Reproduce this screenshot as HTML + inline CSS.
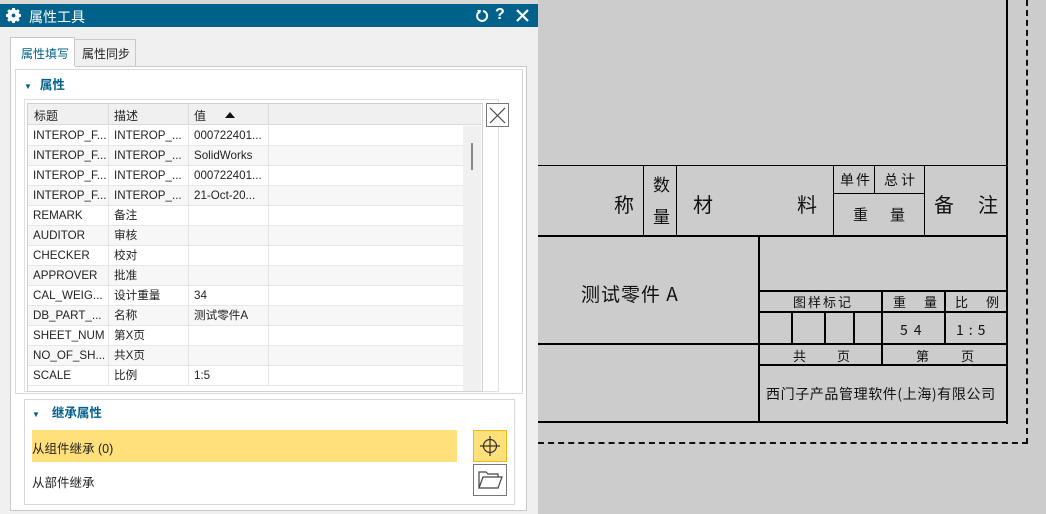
<!DOCTYPE html>
<html><head><meta charset="utf-8"><style>
*{margin:0;padding:0;box-sizing:border-box}
body{width:1046px;height:514px;overflow:hidden;background:#cccccc;position:relative;font-family:"Liberation Sans","Noto Sans CJK SC",sans-serif;font-size:12px;color:#222}
.a{position:absolute}
.hl{position:absolute;background:#000}
.dlg{left:0;top:0;width:538px;height:514px;background:#f0f0f0}
.title{left:0;top:4px;width:538px;height:23px;background:#00618a;color:#fff;font-size:14px}
.row{position:absolute;left:28px;width:435px;height:20px;border-bottom:1px solid #e6e6e6}
.row span{position:absolute;top:0;line-height:20px;height:20px;white-space:nowrap;font-size:11.6px;color:#222}
.cd{position:absolute;top:0;height:20px;width:1px;background:#e3e3e3}
.t{position:absolute;font-family:"WenQuanYi Zen Hei","Noto Sans CJK SC",sans-serif;color:#111;white-space:nowrap}
</style></head><body>
<div class="a dlg"></div>
<div class="a" style="left:0;top:0;width:538px;height:4px;background:#d8d8d8"></div>
<div class="a title">
 <svg class="a" style="left:6px;top:4px" width="15" height="15" viewBox="0 0 16 16"><circle cx="8" cy="8" r="5" fill="none" stroke="#fff" stroke-width="3"/><g stroke="#fff" stroke-width="3"><line x1="8" y1="0" x2="8" y2="16"/><line x1="0" y1="8" x2="16" y2="8"/><line x1="2.3" y1="2.3" x2="13.7" y2="13.7"/><line x1="13.7" y1="2.3" x2="2.3" y2="13.7"/></g><circle cx="8" cy="8" r="2" fill="#00618a"/></svg>
 <span class="a" style="left:29px;top:3px">属性工具</span>
 <svg class="a" style="left:475px;top:5px" width="14" height="14" viewBox="0 0 14 14"><path d="M4 3 A5 5 0 1 0 8 2" fill="none" stroke="#fff" stroke-width="2"/><path d="M2 1 L6 1 L5 5Z" fill="#fff"/></svg>
 <span class="a" style="left:495px;top:2px;font-weight:bold;font-size:16px">?</span>
 <svg class="a" style="left:516px;top:5px" width="13" height="13" viewBox="0 0 13 13"><path d="M1 1L12 12M12 1L1 12" stroke="#fff" stroke-width="2.2"/></svg>
</div>
<div class="a" style="left:10px;top:37px;width:65px;height:31px;background:#fff;border:1px solid #c8c8c8;border-bottom:none;color:#00618a;padding:7px 0 0 10px">属性填写</div>
<div class="a" style="left:75px;top:39px;width:61px;height:27px;background:#f0f0f0;border:1px solid #c8c8c8;border-left:none;border-bottom:none;padding:5px 0 0 7px">属性同步</div>
<div class="a" style="left:10px;top:66px;width:517px;height:445px;border:1px solid #c8c8c8;border-top:none;background:#fff"></div>
<div class="a" style="left:75px;top:66px;width:452px;height:1px;background:#c8c8c8"></div>
<div class="a" style="left:15px;top:69px;width:508px;height:325px;border:1px solid #d8d8d8;background:#fff"></div>
<div class="a" style="left:24px;top:74px;font-weight:bold;color:#00618a;font-size:12.5px"><span style="font-size:8px;margin-right:8px">▼</span>属性</div>
<div class="a" style="left:24px;top:99px;width:475px;height:293px;border:1px solid #e0e0e0"></div>
<div class="a" style="left:27px;top:103px;width:456px;height:289px;border:1px solid #d0d0d0;background:#fff"></div>
<div class="a" style="left:28px;top:104px;width:453px;height:21px;background:#f0f0f0;border-bottom:1px solid #d8d8d8"></div>
<div class="a" style="left:108px;top:104px;width:1px;height:21px;background:#d8d8d8"></div>
<div class="a" style="left:188px;top:104px;width:1px;height:21px;background:#d8d8d8"></div>
<div class="a" style="left:268px;top:104px;width:1px;height:21px;background:#d8d8d8"></div>
<span class="a" style="left:34px;top:107px">标题</span><span class="a" style="left:114px;top:107px">描述</span><span class="a" style="left:194px;top:107px">值</span>
<svg class="a" style="left:225px;top:112px" width="10" height="6"><path d="M0 6L5 0L10 6Z" fill="#111"/></svg>
<div class="a" style="left:463px;top:126px;width:18px;height:265px;background:#f0f0f0"></div>
<div class="a" style="left:471px;top:143px;width:2px;height:27px;background:#888"></div>
<div class="a" style="left:486px;top:103px;width:23px;height:24px;border:1px solid #777;background:#fff"></div>
<svg class="a" style="left:489px;top:107px" width="17" height="17"><path d="M1 1L16 16M16 1L1 16" stroke="#444" stroke-width="1.2"/></svg>
<div class="row" style="top:126px"><i class="cd" style="left:80px"></i><i class="cd" style="left:160px"></i><i class="cd" style="left:240px"></i><span style="left:5px">INTEROP_F...</span><span style="left:86px">INTEROP_...</span><span style="left:166px">000722401...</span></div>
<div class="row" style="top:146px;background:#f7f7f7"><i class="cd" style="left:80px"></i><i class="cd" style="left:160px"></i><i class="cd" style="left:240px"></i><span style="left:5px">INTEROP_F...</span><span style="left:86px">INTEROP_...</span><span style="left:166px">SolidWorks</span></div>
<div class="row" style="top:166px"><i class="cd" style="left:80px"></i><i class="cd" style="left:160px"></i><i class="cd" style="left:240px"></i><span style="left:5px">INTEROP_F...</span><span style="left:86px">INTEROP_...</span><span style="left:166px">000722401...</span></div>
<div class="row" style="top:186px;background:#f7f7f7"><i class="cd" style="left:80px"></i><i class="cd" style="left:160px"></i><i class="cd" style="left:240px"></i><span style="left:5px">INTEROP_F...</span><span style="left:86px">INTEROP_...</span><span style="left:166px">21-Oct-20...</span></div>
<div class="row" style="top:206px"><i class="cd" style="left:80px"></i><i class="cd" style="left:160px"></i><i class="cd" style="left:240px"></i><span style="left:5px">REMARK</span><span style="left:86px">备注</span></div>
<div class="row" style="top:226px;background:#f7f7f7"><i class="cd" style="left:80px"></i><i class="cd" style="left:160px"></i><i class="cd" style="left:240px"></i><span style="left:5px">AUDITOR</span><span style="left:86px">审核</span></div>
<div class="row" style="top:246px"><i class="cd" style="left:80px"></i><i class="cd" style="left:160px"></i><i class="cd" style="left:240px"></i><span style="left:5px">CHECKER</span><span style="left:86px">校对</span></div>
<div class="row" style="top:266px;background:#f7f7f7"><i class="cd" style="left:80px"></i><i class="cd" style="left:160px"></i><i class="cd" style="left:240px"></i><span style="left:5px">APPROVER</span><span style="left:86px">批准</span></div>
<div class="row" style="top:286px"><i class="cd" style="left:80px"></i><i class="cd" style="left:160px"></i><i class="cd" style="left:240px"></i><span style="left:5px">CAL_WEIG...</span><span style="left:86px">设计重量</span><span style="left:166px">34</span></div>
<div class="row" style="top:306px;background:#f7f7f7"><i class="cd" style="left:80px"></i><i class="cd" style="left:160px"></i><i class="cd" style="left:240px"></i><span style="left:5px">DB_PART_...</span><span style="left:86px">名称</span><span style="left:166px">测试零件A</span></div>
<div class="row" style="top:326px"><i class="cd" style="left:80px"></i><i class="cd" style="left:160px"></i><i class="cd" style="left:240px"></i><span style="left:5px">SHEET_NUM</span><span style="left:86px">第X页</span></div>
<div class="row" style="top:346px;background:#f7f7f7"><i class="cd" style="left:80px"></i><i class="cd" style="left:160px"></i><i class="cd" style="left:240px"></i><span style="left:5px">NO_OF_SH...</span><span style="left:86px">共X页</span></div>
<div class="row" style="top:366px"><i class="cd" style="left:80px"></i><i class="cd" style="left:160px"></i><i class="cd" style="left:240px"></i><span style="left:5px">SCALE</span><span style="left:86px">比例</span><span style="left:166px">1:5</span></div>
<div class="a" style="left:24px;top:399px;width:491px;height:106px;border:1px solid #d8d8d8;background:#fff"></div>
<div class="a" style="left:32px;top:402px;font-weight:bold;color:#00618a;font-size:12.5px"><span style="font-size:8px;margin-right:12px">▼</span>继承属性</div>
<div class="a" style="left:32px;top:430px;width:425px;height:32px;background:#ffe07a"></div>
<span class="a" style="left:32px;top:438px;font-size:12.5px">从组件继承 (0)</span>
<div class="a" style="left:473px;top:430px;width:34px;height:32px;background:#ffe07a;border:1px solid #f0b820"></div>
<svg class="a" style="left:478px;top:434px" width="24" height="24"><circle cx="12" cy="12" r="6.5" fill="none" stroke="#333" stroke-width="1.2"/><path d="M12 2V22M2 12H22" stroke="#333" stroke-width="1.2"/></svg>
<span class="a" style="left:32px;top:472px;font-size:12.5px">从部件继承</span>
<div class="a" style="left:473px;top:464px;width:34px;height:32px;border:1px solid #777;background:#fff"></div>
<svg class="a" style="left:477px;top:469px" width="26" height="22"><path d="M2 19V3H9L11 5H21V8M2 19L6 8H25L21 19Z" fill="none" stroke="#444" stroke-width="1.2"/></svg>
<div class="hl" style="left:1006px;top:0;width:2px;height:424px"></div>
<div class="a" style="left:1026px;top:0;height:444px;border-left:2px dashed #111"></div>
<div class="a" style="left:538px;top:442px;width:490px;border-top:2px dashed #111"></div>
<div class="hl" style="left:538px;top:165px;width:469px;height:1px"></div>
<div class="hl" style="left:643px;top:165px;width:1px;height:71px"></div>
<div class="hl" style="left:676px;top:165px;width:1px;height:71px"></div>
<div class="hl" style="left:833px;top:165px;width:1px;height:71px"></div>
<div class="hl" style="left:874px;top:165px;width:1px;height:28px"></div>
<div class="hl" style="left:924px;top:165px;width:1px;height:71px"></div>
<div class="hl" style="left:833px;top:193px;width:91px;height:1px"></div>
<div class="hl" style="left:538px;top:235px;width:469px;height:2px"></div>
<div class="hl" style="left:758px;top:236px;width:2px;height:187px"></div>
<div class="hl" style="left:759px;top:290px;width:248px;height:2px"></div>
<div class="hl" style="left:759px;top:311px;width:248px;height:2px"></div>
<div class="hl" style="left:538px;top:343px;width:469px;height:2px"></div>
<div class="hl" style="left:759px;top:364px;width:248px;height:2px"></div>
<div class="hl" style="left:538px;top:421px;width:469px;height:2px"></div>
<div class="hl" style="left:881px;top:291px;width:2px;height:74px"></div>
<div class="hl" style="left:944px;top:291px;width:2px;height:53px"></div>
<div class="hl" style="left:791px;top:312px;width:2px;height:32px"></div>
<div class="hl" style="left:824px;top:312px;width:2px;height:32px"></div>
<div class="hl" style="left:853px;top:312px;width:2px;height:32px"></div>
<span class="t" style="left:614px;top:189px;font-size:20px">称</span>
<span class="t" style="left:653px;top:171px;font-size:17px">数</span>
<span class="t" style="left:653px;top:203px;font-size:17px">量</span>
<span class="t" style="left:693px;top:189px;font-size:20px">材</span>
<span class="t" style="left:797px;top:189px;font-size:20px">料</span>
<span class="t" style="left:840px;top:170px;font-size:14px;letter-spacing:2px">单件</span>
<span class="t" style="left:884px;top:170px;font-size:14px;letter-spacing:3px">总计</span>
<span class="t" style="left:853px;top:204px;font-size:15px">重</span>
<span class="t" style="left:890px;top:204px;font-size:15px">量</span>
<span class="t" style="left:934px;top:189px;font-size:20px">备</span>
<span class="t" style="left:978px;top:189px;font-size:20px">注</span>
<span class="t" style="left:581px;top:280px;font-size:19px;letter-spacing:1px">测试零件 A</span>
<span class="t" style="left:793px;top:292px;font-size:13px;letter-spacing:2px">图样标记</span>
<span class="t" style="left:893px;top:292px;font-size:13px">重</span><span class="t" style="left:924px;top:292px;font-size:13px">量</span>
<span class="t" style="left:955px;top:292px;font-size:13px">比</span><span class="t" style="left:986px;top:292px;font-size:13px">例</span>
<span class="t" style="left:900px;top:320px;font-size:14px;letter-spacing:6px">54</span>
<span class="t" style="left:956px;top:320px;font-size:14px;letter-spacing:5px">1:5</span>
<span class="t" style="left:793px;top:346px;font-size:13px">共</span><span class="t" style="left:837px;top:346px;font-size:13px">页</span>
<span class="t" style="left:916px;top:346px;font-size:13px">第</span><span class="t" style="left:961px;top:346px;font-size:13px">页</span>
<span class="t" style="left:766px;top:384px;font-size:14px;letter-spacing:0.6px">西门子产品管理软件(上海)有限公司</span>
</body></html>
